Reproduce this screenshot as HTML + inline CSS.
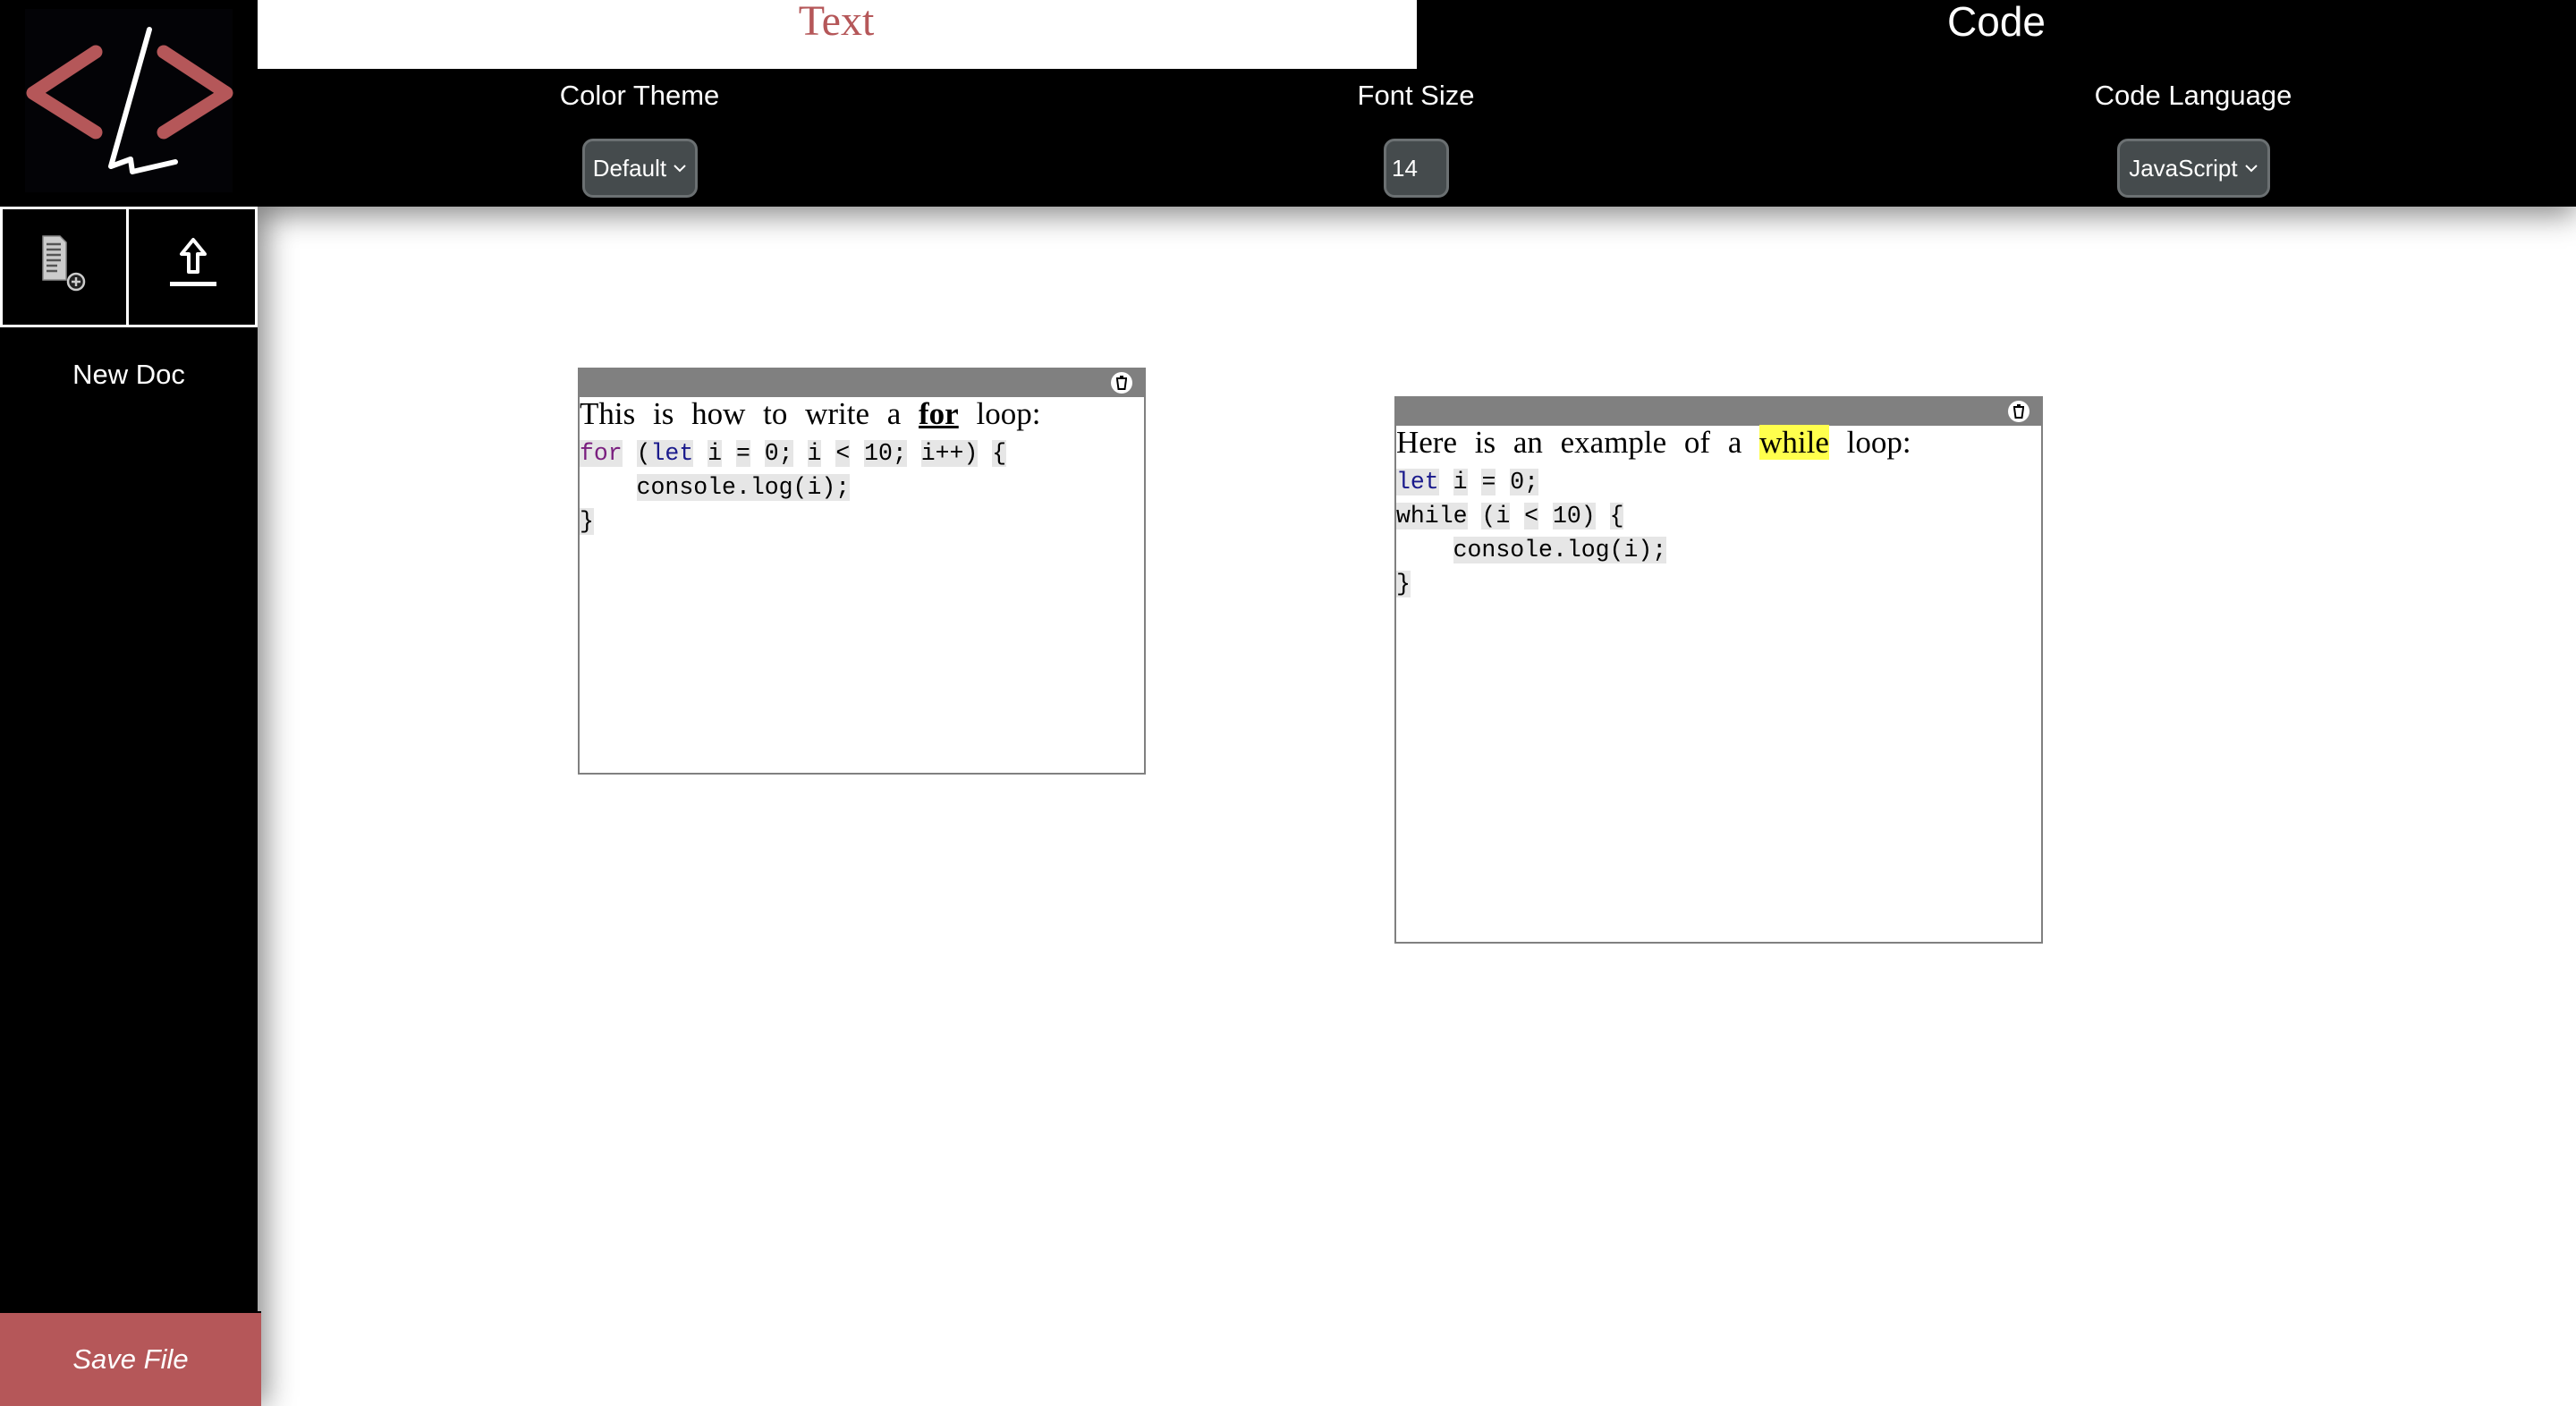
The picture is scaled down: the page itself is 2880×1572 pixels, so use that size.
<!DOCTYPE html>
<html><head><meta charset="utf-8"><style>
*{margin:0;padding:0;box-sizing:border-box}
body{width:2880px;height:1572px;position:relative;overflow:hidden;background:#fff;font-family:"Liberation Sans",sans-serif}
.a{position:absolute}
.side{left:0;top:0;width:288px;height:1572px;background:#000;box-shadow:10px 0 30px rgba(0,0,0,.45);z-index:2}
.top{left:288px;top:0;width:2592px;height:231px;background:#000;box-shadow:0 10px 30px rgba(0,0,0,.45);z-index:1}
.lbl{color:#fff;font-size:31px;transform:translateX(-50%);white-space:nowrap}
.sel{background:#454b4d;border:3px solid #6b7072;border-radius:12px;color:#fff;font-size:26px;display:flex;align-items:center;justify-content:center}
.box{border:2px solid #808080;background:#fff}
.hd{position:absolute;left:0;top:0;right:0;height:31px;background:#808080}
.tx{font-family:"Liberation Serif",serif;font-size:35px;color:#000;white-space:nowrap;word-spacing:11px}
.cd{font-family:"Liberation Mono",monospace;font-size:26.5px;line-height:38px;white-space:pre;color:#000}
.cd span{background:#e6e6e6}
.kw{color:#7a1f7f}.bl{color:#1a1a8c}
</style></head><body>
<div class="a top"></div>
<div class="a" style="left:288px;top:0;width:1296px;height:77px;background:#fff;z-index:3"></div>
<div class="a" style="left:935px;top:-4px;transform:translateX(-50%);font-family:'Liberation Serif',serif;font-size:48px;color:#b55759;z-index:4">Text</div>
<div class="a" style="left:2232px;top:-3px;transform:translateX(-50%);font-size:46px;color:#fff;z-index:4">Code</div>
<div class="a lbl" style="left:715px;top:89px;z-index:4">Color Theme</div>
<div class="a lbl" style="left:1583px;top:89px;z-index:4">Font Size</div>
<div class="a lbl" style="left:2452px;top:89px;z-index:4">Code Language</div>
<div class="a sel" style="left:651px;top:155px;width:129px;height:66px;z-index:4">Default&nbsp;<svg width="16" height="10" viewBox="0 0 16 10"><path d="M2 2l6 6 6-6" stroke="#fff" stroke-width="2" fill="none"/></svg></div>
<div class="a sel" style="left:1547px;top:155px;width:73px;height:66px;justify-content:flex-start;padding-left:6px;z-index:4">14</div>
<div class="a sel" style="left:2367px;top:155px;width:171px;height:66px;z-index:4">JavaScript&nbsp;<svg width="16" height="10" viewBox="0 0 16 10"><path d="M2 2l6 6 6-6" stroke="#fff" stroke-width="2" fill="none"/></svg></div>

<div class="a side">
<svg class="a" style="left:0;top:0" width="288" height="231" viewBox="0 0 288 231">
<rect x="28" y="10" width="232" height="205" fill="#030306"/>
<path d="M107 58L37 104L107 148" stroke="#b55759" stroke-width="15" fill="none" stroke-linecap="round" stroke-linejoin="round"/>
<path d="M183 58L253 104L183 148" stroke="#b55759" stroke-width="15" fill="none" stroke-linecap="round" stroke-linejoin="round"/>
<path d="M167 33L124 186L146 178L148 192L196 181" stroke="#fff" stroke-width="6" fill="none" stroke-linecap="round" stroke-linejoin="round"/>
</svg>
<div class="a" style="left:0;top:231px;width:144px;height:135px;border:3px solid #fff"></div>
<div class="a" style="left:144px;top:231px;width:144px;height:135px;border:3px solid #fff;border-left:none"></div>
<svg class="a" style="left:45px;top:262px" width="55" height="66" viewBox="0 0 55 66">
<path d="M3 2h19l7 7v42H3z" fill="#ccc" stroke="#888" stroke-width="1.5"/>
<g stroke="#555" stroke-width="2.5"><path d="M7 11h16M7 17h16M7 23h16M7 29h16M7 35h12M7 41h12"/></g>
<circle cx="40" cy="53" r="9" fill="#222" stroke="#ccc" stroke-width="2.5"/><path d="M35 53h10M40 48v10" stroke="#ccc" stroke-width="2.5"/>
</svg>
<svg class="a" style="left:188px;top:265px" width="60" height="62" viewBox="0 0 60 62">
<path d="M28 3L15 19h8v20h10V19h8z" fill="none" stroke="#fff" stroke-width="4" stroke-linejoin="round"/>
<rect x="2" y="50" width="52" height="5" fill="#fff"/>
</svg>
<div class="a lbl" style="left:144px;top:401px">New Doc</div>
<div class="a" style="left:0;top:1466px;width:292px;height:106px;background:#b55759;border-top:2px solid #000;color:#fff;font-size:31px;font-style:italic;display:flex;align-items:center;justify-content:center">Save File</div>
</div>

<div class="a box" style="left:646px;top:411px;width:635px;height:455px">
<div class="hd"></div>
<svg class="a" style="right:12px;top:2px" width="26" height="26" viewBox="0 0 26 26"><circle cx="13" cy="13" r="12" fill="#fff"/><path d="M7 8h12M11 6h4M8 9l1.5 11h7L18 9" stroke="#000" stroke-width="2" fill="none"/></svg>
<div class="a tx" style="left:0;top:30px">This is how to write a <b><u>for</u></b> loop:</div>
<div class="a cd" style="left:0;top:75px"><span class="kw">for</span> <span>(<b class="bl" style="font-weight:normal">let</b></span> <span>i</span> <span>=</span> <span>0;</span> <span>i</span> <span>&lt;</span> <span>10;</span> <span>i++)</span> <span>{</span>
    <span>console.log(i);</span>
<span>}</span></div>
</div>

<div class="a box" style="left:1559px;top:443px;width:725px;height:612px">
<div class="hd"></div>
<svg class="a" style="right:12px;top:2px" width="26" height="26" viewBox="0 0 26 26"><circle cx="13" cy="13" r="12" fill="#fff"/><path d="M7 8h12M11 6h4M8 9l1.5 11h7L18 9" stroke="#000" stroke-width="2" fill="none"/></svg>
<div class="a tx" style="left:0;top:30px">Here is an example of a <span style="background:#ffff4d">while</span> loop:</div>
<div class="a cd" style="left:0;top:75px"><span class="bl">let</span> <span>i</span> <span>=</span> <span>0;</span>
<span>while</span> <span>(i</span> <span>&lt;</span> <span>10)</span> <span>{</span>
    <span>console.log(i);</span>
<span>}</span></div>
</div>
</body></html>
